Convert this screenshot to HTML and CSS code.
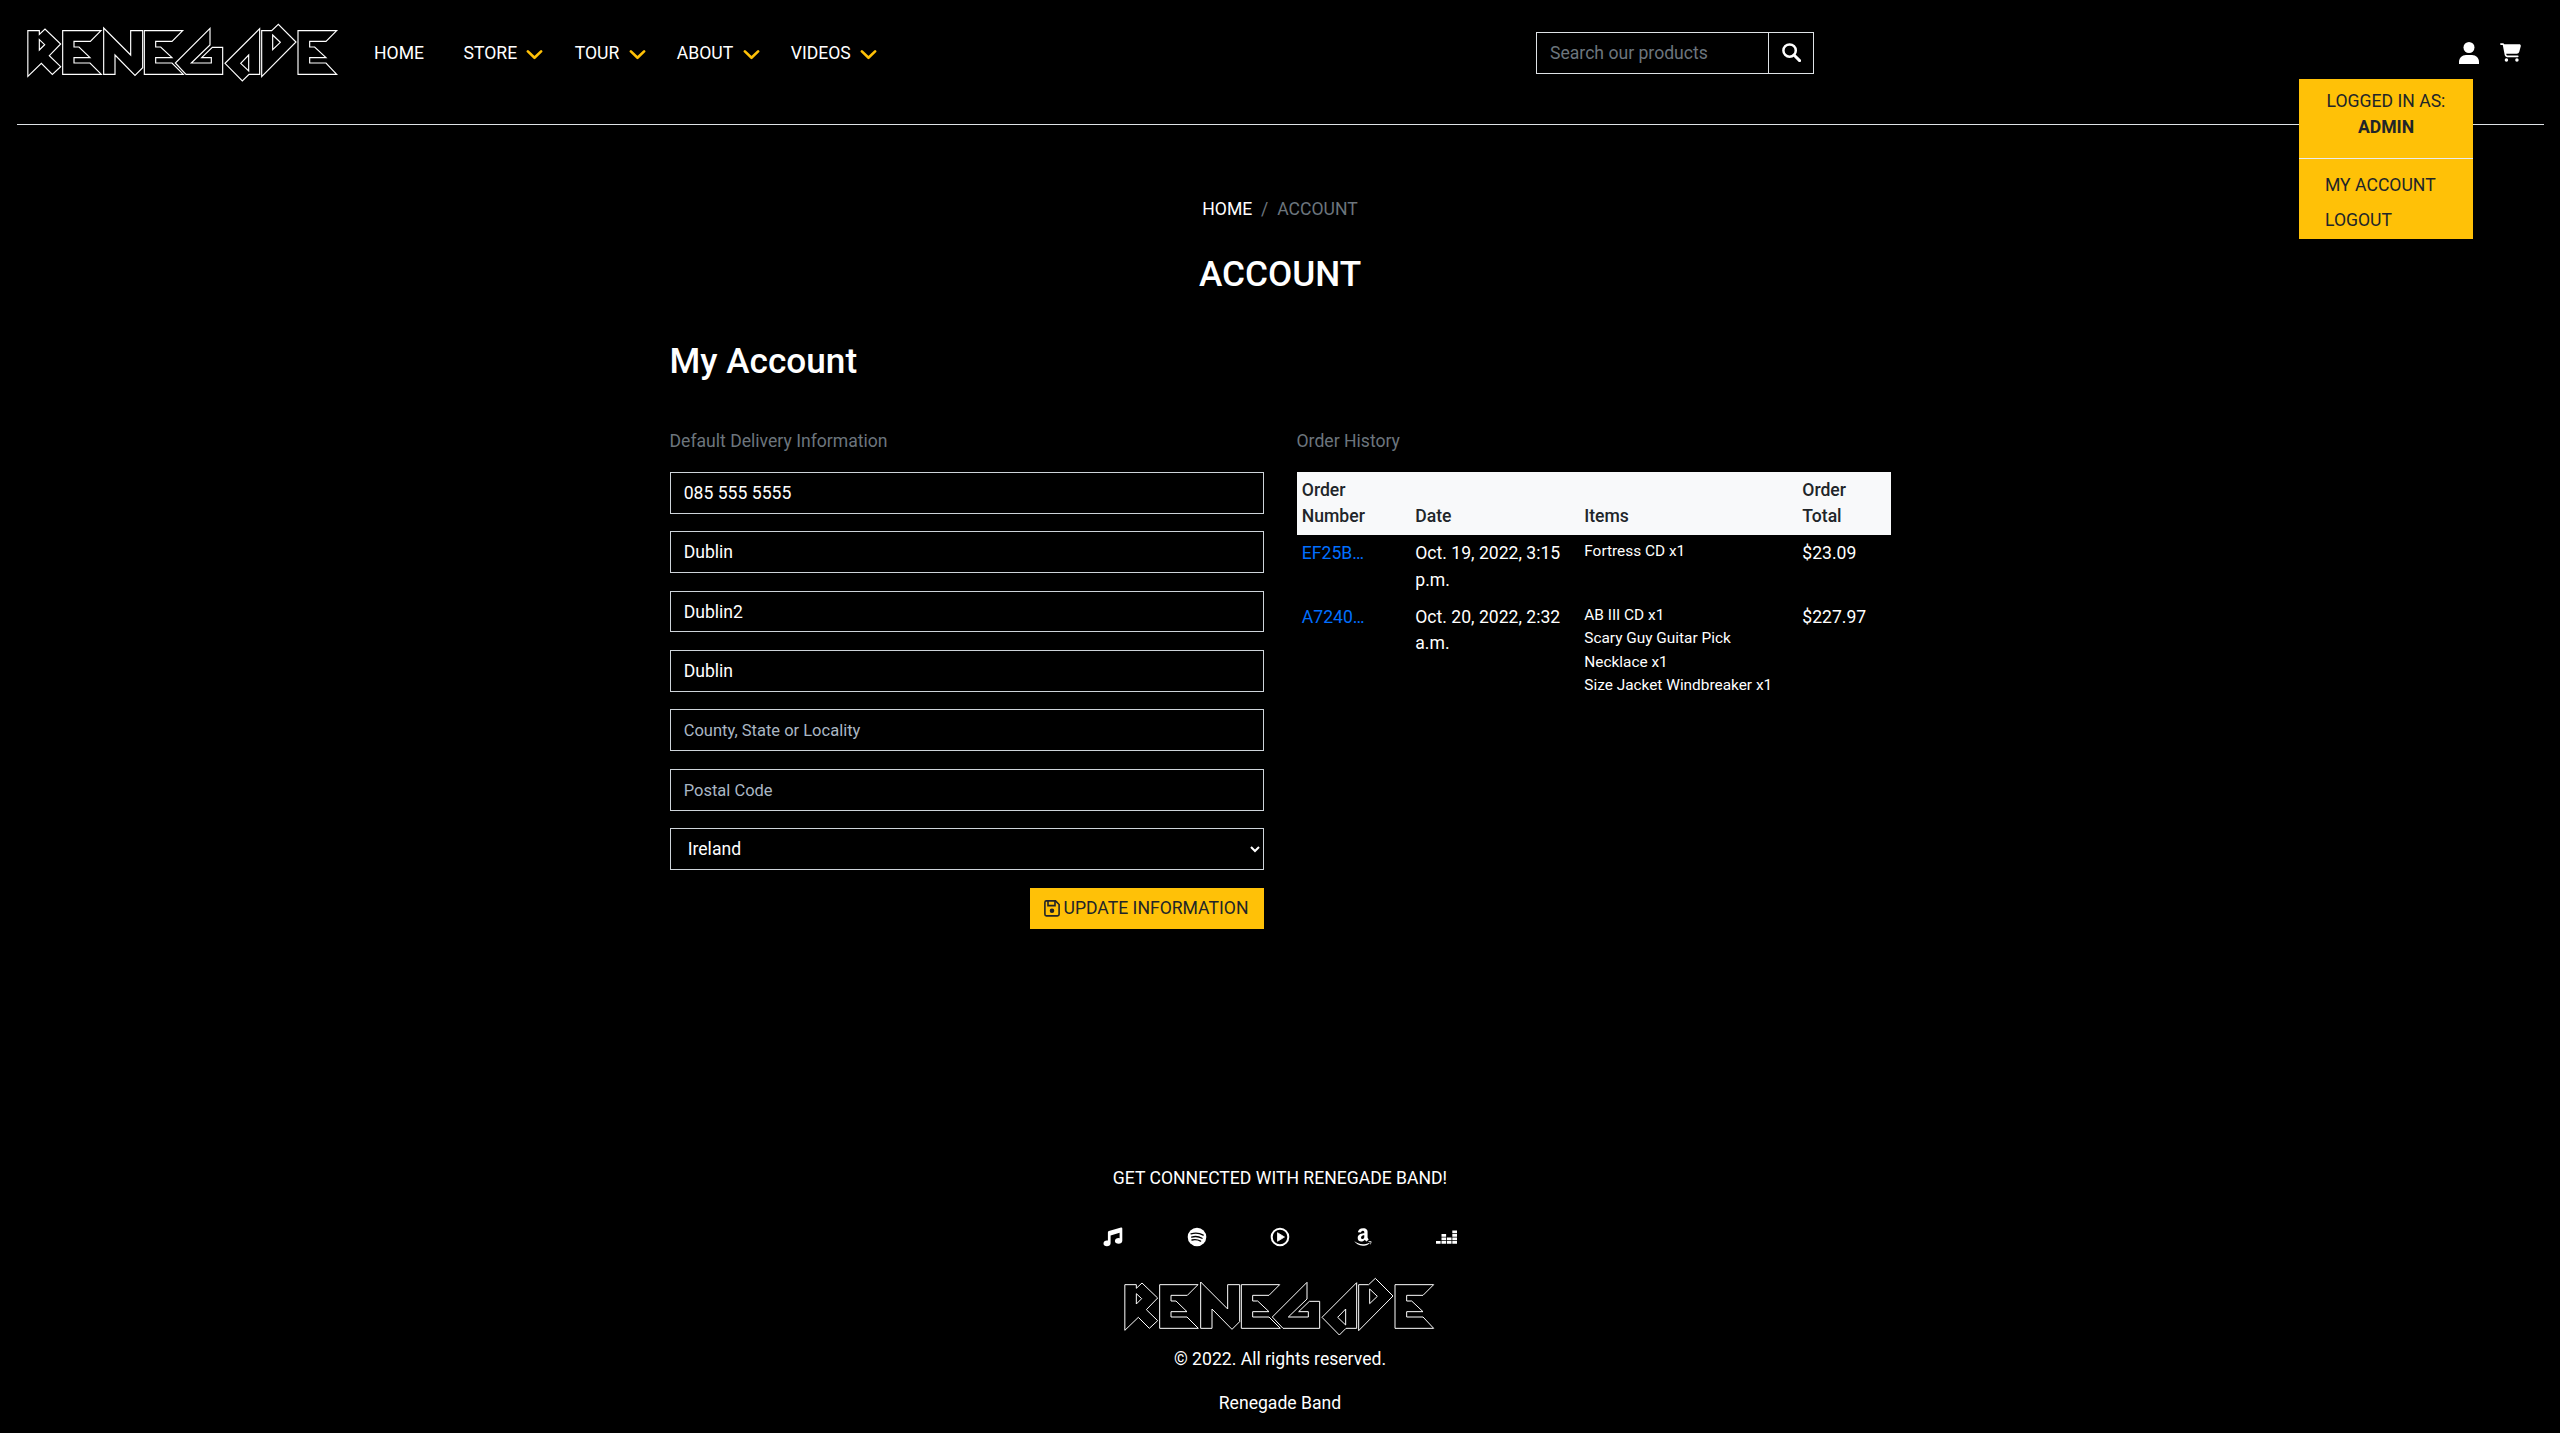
FILE: index.html
```html
<!DOCTYPE html>
<html lang="en">
<head>
<meta charset="utf-8">
<title>Renegade | Account</title>
<link rel="stylesheet" href="styles.css">
</head>
<body>
<svg class="defs" aria-hidden="true">
  <symbol id="logo" viewBox="78 66 942 183">
    <g fill="none" stroke="currentColor">
      <path d="M83.500 92H118V103L135 87L182 132L148 167L182 200L157 223L124 190L83.500 229ZM118 119L134 134L118 150Z"/>
      <path d="M188 92H303L271 124H222V141H237L270 173H222V189H270L304 223H188Z"/>
      <path d="M311 84L392 165V92H428V203L405 226L345 165V223H311Z"/>
      <path d="M433 92H548L516 124H467V141H482L516 173H467V189H516L550 223H433Z"/>
      <path d="M630 85V135L574 189H634V173H605L637 142H668V223H558L526 189Z"/>
      <path d="M779 86L675 190L727 243L747 223H779ZM722 190L746 165V213Z"/>
      <path d="M785 92H815L835 73L888 126L785 230ZM818 105L841 127L818 149Z"/>
      <path d="M894 92H1010L978 124H929V141H944L978 173H929V189H978L1010 223H894Z"/>
    </g>
  </symbol>
  <symbol id="chev" viewBox="0 0 16 10"><path d="M1.400 1.400L8 7.800L14.600 1.400" fill="none" stroke="currentColor" stroke-width="2.600" stroke-linecap="round" stroke-linejoin="round"/></symbol>
</svg>
<header class="header">
  <a class="brand"><svg class="logo"><use href="#logo"/></svg></a>
  <nav class="nav">
    <a class="home">HOME</a>
    <a>STORE<svg class="chev"><use href="#chev"/></svg></a>
    <a>TOUR<svg class="chev"><use href="#chev"/></svg></a>
    <a>ABOUT<svg class="chev"><use href="#chev"/></svg></a>
    <a>VIDEOS<svg class="chev"><use href="#chev"/></svg></a>
  </nav>
  <form class="search">
    <input type="text" placeholder="Search our products">
    <button type="button" aria-label="Search"><svg width="19" height="19" viewBox="0 0 19 19" fill="none" stroke="#fff"><circle cx="7.600" cy="7.600" r="6.200" stroke-width="2.500"/><path d="M12 12l5.600 5.600" stroke-width="2.900" stroke-linecap="round"/></svg></button>
  </form>
  <div class="tools">
    <svg class="user" viewBox="0 0 20 22" fill="#fff"><circle cx="10" cy="5.500" r="5.500"/><path d="M0 22v-2c0-4 3-7 7-7h6c4 0 7 3 7 7v2z"/></svg>
    <svg class="cart" viewBox="0 0 576 512" fill="#fff"><path d="M0 24C0 10.700 10.700 0 24 0H69.500c22 0 41.500 12.800 50.600 32h411c26.300 0 45.500 25 38.600 50.400l-41 152.300c-8.500 31.400-37 53.300-69.500 53.300H170.700l5.400 28.500c2.200 11.300 12.100 19.500 23.600 19.500H488c13.300 0 24 10.700 24 24s-10.700 24-24 24H199.700c-34.600 0-64.300-24.600-70.700-58.500L77.400 54.500c-.7-3.800-4-6.500-7.900-6.500H24C10.700 48 0 37.300 0 24zM128 464a48 48 0 1 1 96 0 48 48 0 1 1-96 0zm336-48a48 48 0 1 1 0 96 48 48 0 1 1 0-96z"/></svg>
    <div class="menu">
      <p class="who">LOGGED IN AS:<br><strong>ADMIN</strong></p>
      <a>MY ACCOUNT</a>
      <a>LOGOUT</a>
    </div>
  </div>
</header>
<main class="container">
  <div class="crumbs"><a>HOME</a><span class="sep">/</span><span>ACCOUNT</span></div>
  <h1>ACCOUNT</h1>
  <h2>My Account</h2>
  <div class="columns">
    <section>
      <p class="label">Default Delivery Information</p>
      <form class="delivery">
        <input type="text" value="085 555 5555">
        <input type="text" value="Dublin">
        <input type="text" value="Dublin2">
        <input type="text" value="Dublin">
        <input type="text" placeholder="County, State or Locality">
        <input type="text" placeholder="Postal Code">
        <select><option>Ireland</option></select>
        <button type="button" class="update"><svg width="16" height="17" viewBox="0 0 16 17" fill="none" stroke="#212529" stroke-width="1.600"><path d="M2.300.9h9.200l3.600 3.600v9.800q0 1.600-1.600 1.600H2.300Q.9 15.900.9 14.300V2.500Q.9.9 2.300.9z"/><path d="M4 1v4.600h7V1"/><circle cx="8" cy="10.800" r="1.500" fill="#212529"/></svg>UPDATE INFORMATION</button>
      </form>
    </section>
    <section>
      <p class="label">Order History</p>
      <table class="orders">
        <colgroup><col class="c1"><col class="c2"><col class="c3"><col class="c4"></colgroup>
        <thead><tr><th>Order<br>Number</th><th>Date</th><th>Items</th><th>Order<br>Total</th></tr></thead>
        <tbody>
          <tr><td><a>EF25B…</a></td><td>Oct. 19, 2022, 3:15<br>p.m.</td><td><ul><li>Fortress CD x1</li></ul></td><td>$23.09</td></tr>
          <tr><td><a>A7240…</a></td><td>Oct. 20, 2022, 2:32<br>a.m.</td><td><ul><li>AB III CD x1</li><li>Scary Guy Guitar Pick<br>Necklace x1</li><li>Size Jacket Windbreaker x1</li></ul></td><td>$227.97</td></tr>
        </tbody>
      </table>
    </section>
  </div>
</main>
<footer class="footer">
  <p>GET CONNECTED WITH RENEGADE BAND!</p>
  <div class="social">
    <svg viewBox="0 0 20 20" fill="#fff"><path d="M19.300 1.500v12.300c0 1.900-1.700 3-3.700 3s-3.700-1-3.700-2.800 1.700-2.900 3.700-2.900q.7 0 1 .1V5.800L7.600 8.400v7.800c0 1.900-1.700 3-3.700 3S.5 18.100.5 16.400s1.500-2.900 3.400-2.900q.7 0 1 .1V5.200q0-1 1-1.300L18 .6q1.200-.3 1.300.9z"/></svg>
    <svg viewBox="0 0 20 20"><circle cx="10" cy="10" r="9.300" fill="#fff"/><path d="M4 6.900c4.200-1.200 8.700-.7 12.200 1.200M4.600 10.100c3.500-1 7.300-.6 10.400 1.200M5 13c3-.7 6-.3 8.600 1.100" fill="none" stroke="#000" stroke-width="1.300" stroke-linecap="round"/></svg>
    <svg viewBox="0 0 20 20"><circle cx="10" cy="10" r="8.300" fill="none" stroke="#fff" stroke-width="2"/><path d="M7.500 5.700l7 4.300-7 4.300z" fill="#fff" stroke="#fff" stroke-width=".8" stroke-linejoin="round"/></svg>
    <svg viewBox="0 0 448 512" fill="#fff"><path d="M257.200 162.700c-48.700 1.800-169.500 15.500-169.500 117.500 0 109.500 138.300 114 183.500 43.200 6.500 10.200 35.400 37.500 45.300 46.800l56.800-56S341 288.900 341 261.400V114.300C341 89 316.500 32 228.700 32 140.700 32 94 87 94 136.300l73.500 6.800c16.300-49.500 54.200-49.500 54.200-49.500 40.700-.1 35.500 29.800 35.500 69.100zm0 86.800c0 80-84.200 68-84.200 17.200 0-47.200 50.500-56.700 84.200-57.800v40.600zm136 163.500c-7.700 10-70 67-174.500 67S34.200 408.500 9.700 379c-6.800-7.700 1-11.300 5.500-8.300C88.500 415.200 203 488.500 387.700 401c7.500-3.700 13.300 2 5.500 12zm39.800 2.200c-6.500 15.800-16 26.800-21.200 31-5.500 4.500-9.500 2.700-6.500-3.800s19.300-46.500 12.700-55c-6.500-8.300-37-4.300-48-3.200-10.800 1-13 2-14-.3-2.300-5.700 21.700-15.500 37.500-17.500 15.700-1.800 41-.8 46 5.700 3.700 5.100 0 27.100-6.500 43.100z"/></svg>
    <svg class="deezer" viewBox="0 0 21 20" fill="#fff"><path d="M0 14h4.600v2.700H0zM5.500 14h4.600v2.700H5.500zM10.900 14h4.600v2.700h-4.600zM16.300 14h4.700v2.700h-4.700zM5.500 10.500h4.600v2.700H5.500zM10.900 10.500h4.600v2.700h-4.600zM16.300 10.500h4.700v2.700h-4.700zM5.500 7h4.600v2.700H5.500zM16.300 7h4.700v2.700h-4.700zM16.300 3.500h4.700v2.700h-4.700z"/></svg>
  </div>
  <svg class="logo"><use href="#logo"/></svg>
  <p class="copy">© 2022. All rights reserved.</p>
  <p class="band">Renegade Band</p>
</footer>
</body>
</html>
```
FILE: styles.css
```css
* { box-sizing: border-box; }
html { font-size: 17.6px; background: #fff; }
body {
  margin: 0;
  height: 1433px;
  overflow: hidden;
  display: flex;
  flex-direction: column;
  background: #000;
  color: #fff;
  font: 400 1rem/1.5 Roboto, sans-serif;
}
p, h1, h2, ul { margin: 0; padding: 0; }
svg { display: block; flex: none; }
input, select, button { font: inherit; border-radius: 0; }
.defs { position: absolute; width: 0; height: 0; }

.header {
  flex: none;
  display: flex;
  align-items: flex-start;
  height: 125px;
  margin: 0 16px 0 17px;
  border-bottom: 1px solid #dee2e6;
}
.logo { width: 314px; height: 61px; color: #fff; stroke-width: 3.5; }
.brand { margin: 22px 0 0 9px; width: 314px; flex: none; }
.nav { flex: none; display: flex; width: 1195px; padding: 39.500px 0 0 34px; }
.nav a { display: flex; align-items: center; margin-right: 31.200px; }
.nav .home { margin-right: 39.500px; }
.chev { width: 17px; height: 10px; margin: 4px 0 0 9.300px; color: #ffc107; }
.search { display: flex; width: 278px; height: 42px; margin: 32px 0 0 1px; border: 1px solid #dee2e6; }
.search input { width: 231px; padding: 1px 13px 0; border: 0; background: #000; color: #fff; }
.search input::placeholder { color: #6c757d; opacity: 1; }
.search button { flex: 1; padding: 0 0 1px 13px; border: 0; border-left: 1px solid #dee2e6; background: #000; }
.tools { position: relative; display: flex; margin: 42px 23px 0 auto; gap: 21px; }
.user { width: 20px; height: 22px; }
.cart { width: 21px; height: 19px; margin-top: 1px; }
.menu {
  position: absolute;
  top: 37px;
  right: 48px;
  width: 174px;
  height: 159.500px;
  background: #ffc107;
  color: #212529;
}
.who { height: 79.500px; padding-top: 8.500px; text-align: center; border-bottom: 1px solid #e9ecef; }
.who strong { font-weight: 700; }
.menu a { display: block; height: 35.200px; padding-left: 26px; }
.who + a { margin-top: 13.300px; }

.container { width: 1221px; margin: 0 auto; }
.crumbs { display: flex; justify-content: center; margin-top: 70.800px; color: #6c757d; }
.crumbs a { color: #fff; }
.crumbs .sep { padding: 0 8.800px; }
h1, h2 { font-size: 2rem; line-height: 1.2; font-weight: 500; }
h1 { margin-top: 30.500px; text-align: center; }
h2 { margin-top: 45.200px; }
.columns { display: grid; grid-template-columns: 1fr 1fr; column-gap: 33px; margin-top: 45.500px; }
.label { color: #6c757d; margin-bottom: 17.600px; }
.delivery { display: flex; flex-direction: column; gap: 17.600px; }
.delivery input, .delivery select {
  height: 41.800px;
  width: 100%;
  padding: 6.600px 13.200px;
  border: 1px solid #ced4da;
  background: #000;
  color: #fff;
}
.delivery select { padding: 6.600px 11.500px 6.600px 13.200px; }
.delivery input::placeholder { color: #aab7c4; opacity: 1; font-size: 16.500px; }
.update {
  align-self: flex-end;
  display: flex;
  align-items: center;
  gap: 4px;
  width: 234px;
  height: 41.800px;
  padding: 0 14px;
  border: 0;
  background: #ffc107;
  color: #212529;
  white-space: nowrap;
}

.orders { width: 594px; table-layout: fixed; border-collapse: collapse; }
.c1 { width: 113.500px; }
.c2 { width: 169px; }
.c3 { width: 218px; }
.orders th, .orders td { padding: 5.280px; text-align: left; vertical-align: top; white-space: nowrap; }
.orders th { vertical-align: bottom; font-weight: 500; background: #f8f9fa; color: #212529; }
.orders a { color: #006fff; }
.orders ul { list-style: none; font-size: 15.400px; line-height: 23.500px; }

.footer { margin-top: auto; display: flex; flex-direction: column; align-items: center; height: 268px; }
.social { display: grid; grid-template-columns: repeat(5, 83.300px); justify-items: center; margin-top: 36px; }
.social svg { width: 20px; height: 20px; }
.social .deezer { width: 21px; }
.footer .logo { margin-top: 29px; stroke-width: 3; }
.copy { margin-top: 8.500px; }
.band { margin-top: 17.600px; }
```
